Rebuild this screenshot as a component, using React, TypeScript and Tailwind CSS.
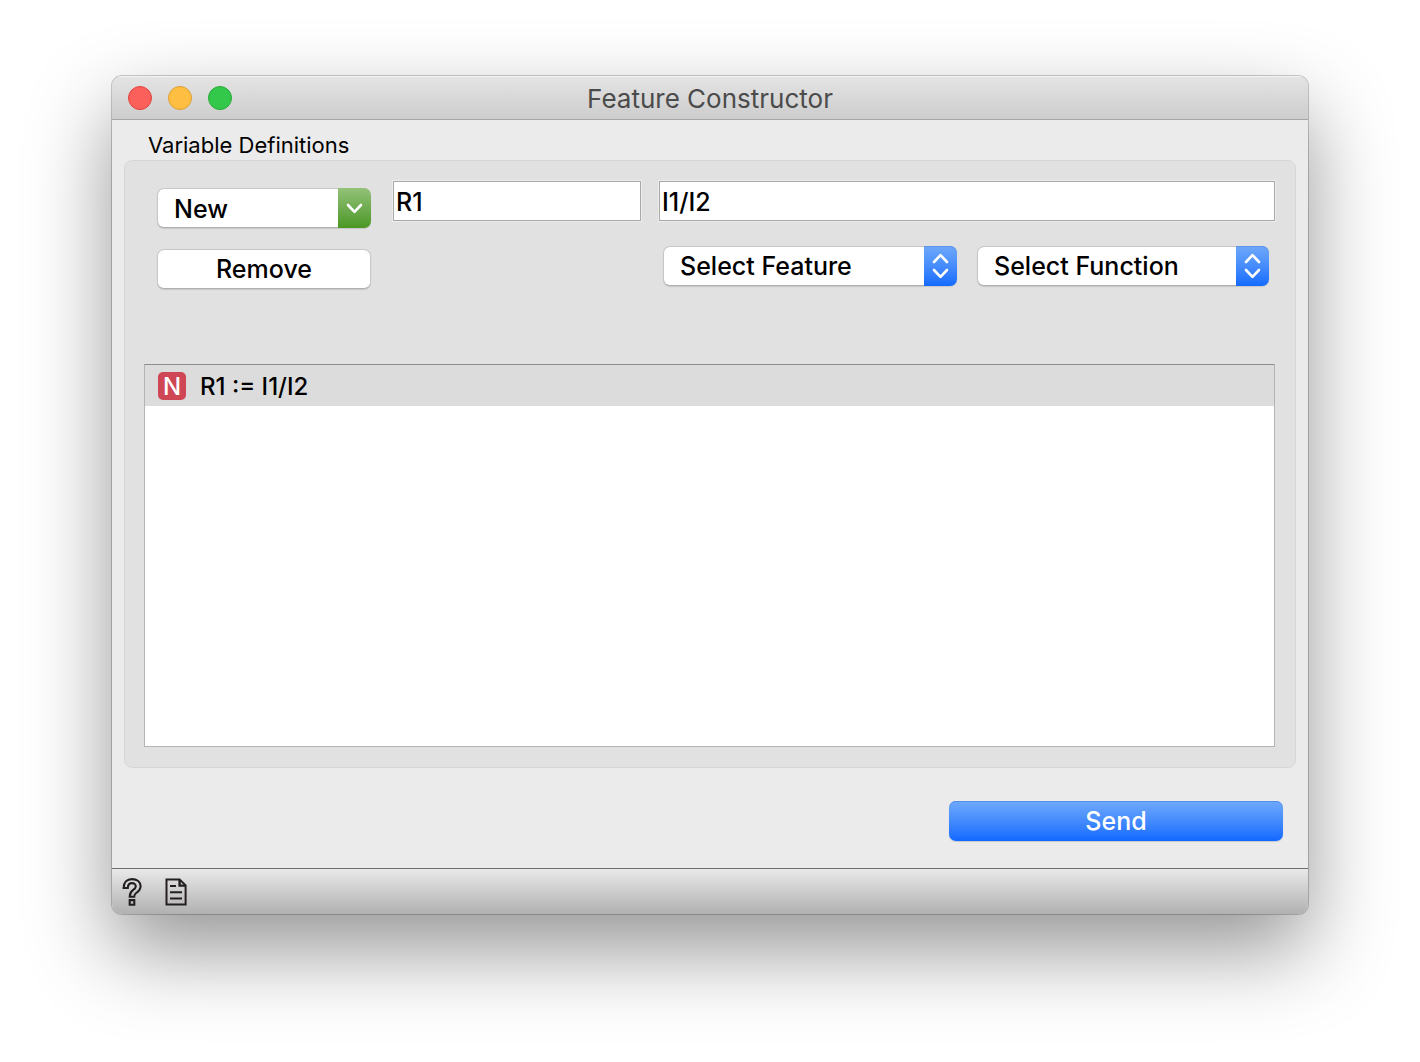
import { useState } from "react";

type SelectProps = { label: string; options: string[]; className: string };

function PopupSelect({ label, options, className }: SelectProps) {
  return (
    <div
      className={`relative flex h-10 rounded-[7px] border border-[#c6c6c6] border-b-[#b0b0b0] bg-white shadow-[0_1px_1px_rgba(0,0,0,0.12)] ${className}`}
    >
      <select
        aria-label={label}
        className="w-full appearance-none rounded-[7px] bg-transparent pl-4 pr-10 text-[25px] leading-9 font-medium text-black outline-none"
      >
        <option>{label}</option>
        {options.map((o) => (
          <option key={o}>{o}</option>
        ))}
      </select>
      <span className="pointer-events-none absolute -inset-y-px -right-px flex w-[33px] items-center justify-center rounded-r-[7px] bg-linear-to-b from-[#6fa8f9] to-[#126bff] shadow-[inset_0_1px_0_#5b94ea]">
        <svg width="17" height="26" viewBox="0 0 17 26" fill="none" stroke="white" strokeWidth="2.6" strokeLinecap="round" strokeLinejoin="round">
          <path d="M2 9 L8.5 2.2 L15 9" />
          <path d="M2 17 L8.5 23.8 L15 17" />
        </svg>
      </span>
    </div>
  );
}

function TextField({ label, initial, className }: { label: string; initial: string; className: string }) {
  const [value, setValue] = useState(initial);
  return (
    <input
      type="text"
      aria-label={label}
      value={value}
      onChange={(e) => setValue(e.target.value)}
      className={`h-10 border border-[#a9a9a9] bg-white px-[2px] pt-[2px] text-[25px] leading-9 font-medium text-black shadow-[0_0_0_1px_#ececec] outline-none ${className}`}
    />
  );
}

export default function App() {
  return (
    <div className="bg-white px-28 pt-[76px] pb-[148px] font-['Inter',sans-serif] text-black">
      <div className="overflow-hidden rounded-[10px] bg-[#ebebeb] shadow-[0_0_0_1px_rgba(0,0,0,0.2),0_36px_84px_rgba(0,0,0,0.42)]">
        <header className="relative flex h-11 items-center justify-center border-b border-[#a6a6a6] bg-linear-to-b from-[#e4e4e4] to-[#cdcdcd] shadow-[inset_0_1px_0_#f4f4f4]">
          <div className="absolute left-4 flex gap-4">
            <button aria-label="Close" className="size-6 rounded-full border border-[#e0443f] bg-[#fc605b]" />
            <button aria-label="Minimize" className="size-6 rounded-full border border-[#dea034] bg-[#fdbe41]" />
            <button aria-label="Zoom" className="size-6 rounded-full border border-[#27aa35] bg-[#34c84a]" />
          </div>
          <h1 className="pt-[2px] text-[26px] leading-8 text-[#4b4b4b]">Feature Constructor</h1>
        </header>

        <main className="px-3">
          <h2 className="pt-[11px] pb-px pl-6 text-[22px] leading-7">Variable Definitions</h2>
          <section className="rounded-lg border border-[#d6d6d6] bg-[#e1e1e1] py-5 pr-5 pl-[19px]">
            <div className="flex items-start">
              <div className="ml-[13px] flex w-[214px] flex-col gap-[21px] pt-[7px]">
                <button className="flex h-10 rounded-[7px] border border-r-0 border-[#c6c6c6] border-b-[#b0b0b0] bg-white pl-4 text-left text-[25px] font-medium shadow-[0_1px_1px_rgba(0,0,0,0.12)]">
                  <span className="flex-1 leading-10">New</span>
                  <span className="-my-px flex h-10 w-[33px] items-center justify-center rounded-r-[7px] bg-linear-to-b from-[#93c277] to-[#4a9722]">
                    <svg width="17" height="11" viewBox="0 0 17 11" fill="none" stroke="white" strokeWidth="2.6" strokeLinecap="round" strokeLinejoin="round">
                      <path d="M2 2 L8.5 8.8 L15 2" />
                    </svg>
                  </span>
                </button>
                <button className="h-10 rounded-[7px] border border-[#c6c6c6] border-b-[#b0b0b0] bg-white text-[25px] leading-9 font-medium shadow-[0_1px_1px_rgba(0,0,0,0.12)]">
                  Remove
                </button>
              </div>
              <TextField label="Variable name" initial="R1" className="ml-[22px] w-[248px]" />
              <div className="ml-[18px] flex flex-1 flex-col gap-[25px]">
                <TextField label="Expression" initial="I1/I2" className="w-full" />
                <div className="grid grid-cols-[294fr_292fr] gap-5 pr-[6px] pl-1">
                  <PopupSelect label="Select Feature" options={["I1", "I2"]} className="min-w-0" />
                  <PopupSelect label="Select Function" options={["abs", "sqrt"]} className="min-w-0" />
                </div>
              </div>
            </div>

            <ul className="mt-[75px] h-[383px] border border-t-[#8e8e8e] border-r-[#b4b4b4] border-b-[#b4b4b4] border-l-[#b4b4b4] bg-white">
              <li className="flex h-[41px] items-center bg-[#dcdcdc] pt-px pl-[13px] text-2xl font-medium">
                <span className="mr-[14px] flex size-7 items-center justify-center rounded-[5px] bg-[#cf4655] pt-px text-2xl leading-7 text-white">N</span>
                <span className="pt-px">R1 := I1/I2</span>
              </li>
            </ul>
          </section>
          <div className="flex justify-end pt-[33px] pr-[13px] pb-[27px]">
            <button className="h-10 w-[334px] rounded-[7px] bg-linear-to-b from-[#6fa9fa] to-[#0f68ff] text-[25px] leading-10 font-medium text-white shadow-[inset_0_1px_0_#5490ea,0_1px_1px_rgba(0,0,0,0.15)]">
              Send
            </button>
          </div>
        </main>

        <footer className="flex h-[46px] items-center gap-[22px] border-t border-[#6e6e6e] bg-linear-to-b from-[#e9e9e9] to-[#b1b1b1] pl-[10px]">
          <button aria-label="Help">
            <svg width="20" height="30" viewBox="0 0 20 30" fill="none" stroke="#231f20" strokeWidth="2.1" strokeLinejoin="miter">
              <path d="M1.6 11 C1.6 5.2 4.8 2.1 10 2.1 C15 2.1 18.6 4.9 18.6 9.3 C18.6 12.7 16.6 14.4 14.2 16 C12.5 17.2 12.2 17.8 12.2 19.8 H7.7 C7.7 16.4 8.4 15 10.9 13.2 C12.9 11.8 13.8 11 13.8 9.3 C13.8 7.3 12.3 6.1 10 6.1 C7.3 6.1 5.9 7.8 5.8 11 Z" />
              <path d="M7.7 23.1 H12.3 V27.7 H7.7 Z" />
            </svg>
          </button>
          <button aria-label="Report">
            <svg width="24" height="30" viewBox="0 0 24 30" fill="none" stroke="#231f20" strokeWidth="2">
              <path d="M2.5 2.6 H15.6 L21.6 8.4 V27.4 H2.5 Z" />
              <path d="M15.6 3 V8.6 H21" strokeWidth="2.4" />
              <path d="M6 9 H12 M6 15.2 H18 M6 21.4 H18" />
            </svg>
          </button>
        </footer>
      </div>
    </div>
  );
}
